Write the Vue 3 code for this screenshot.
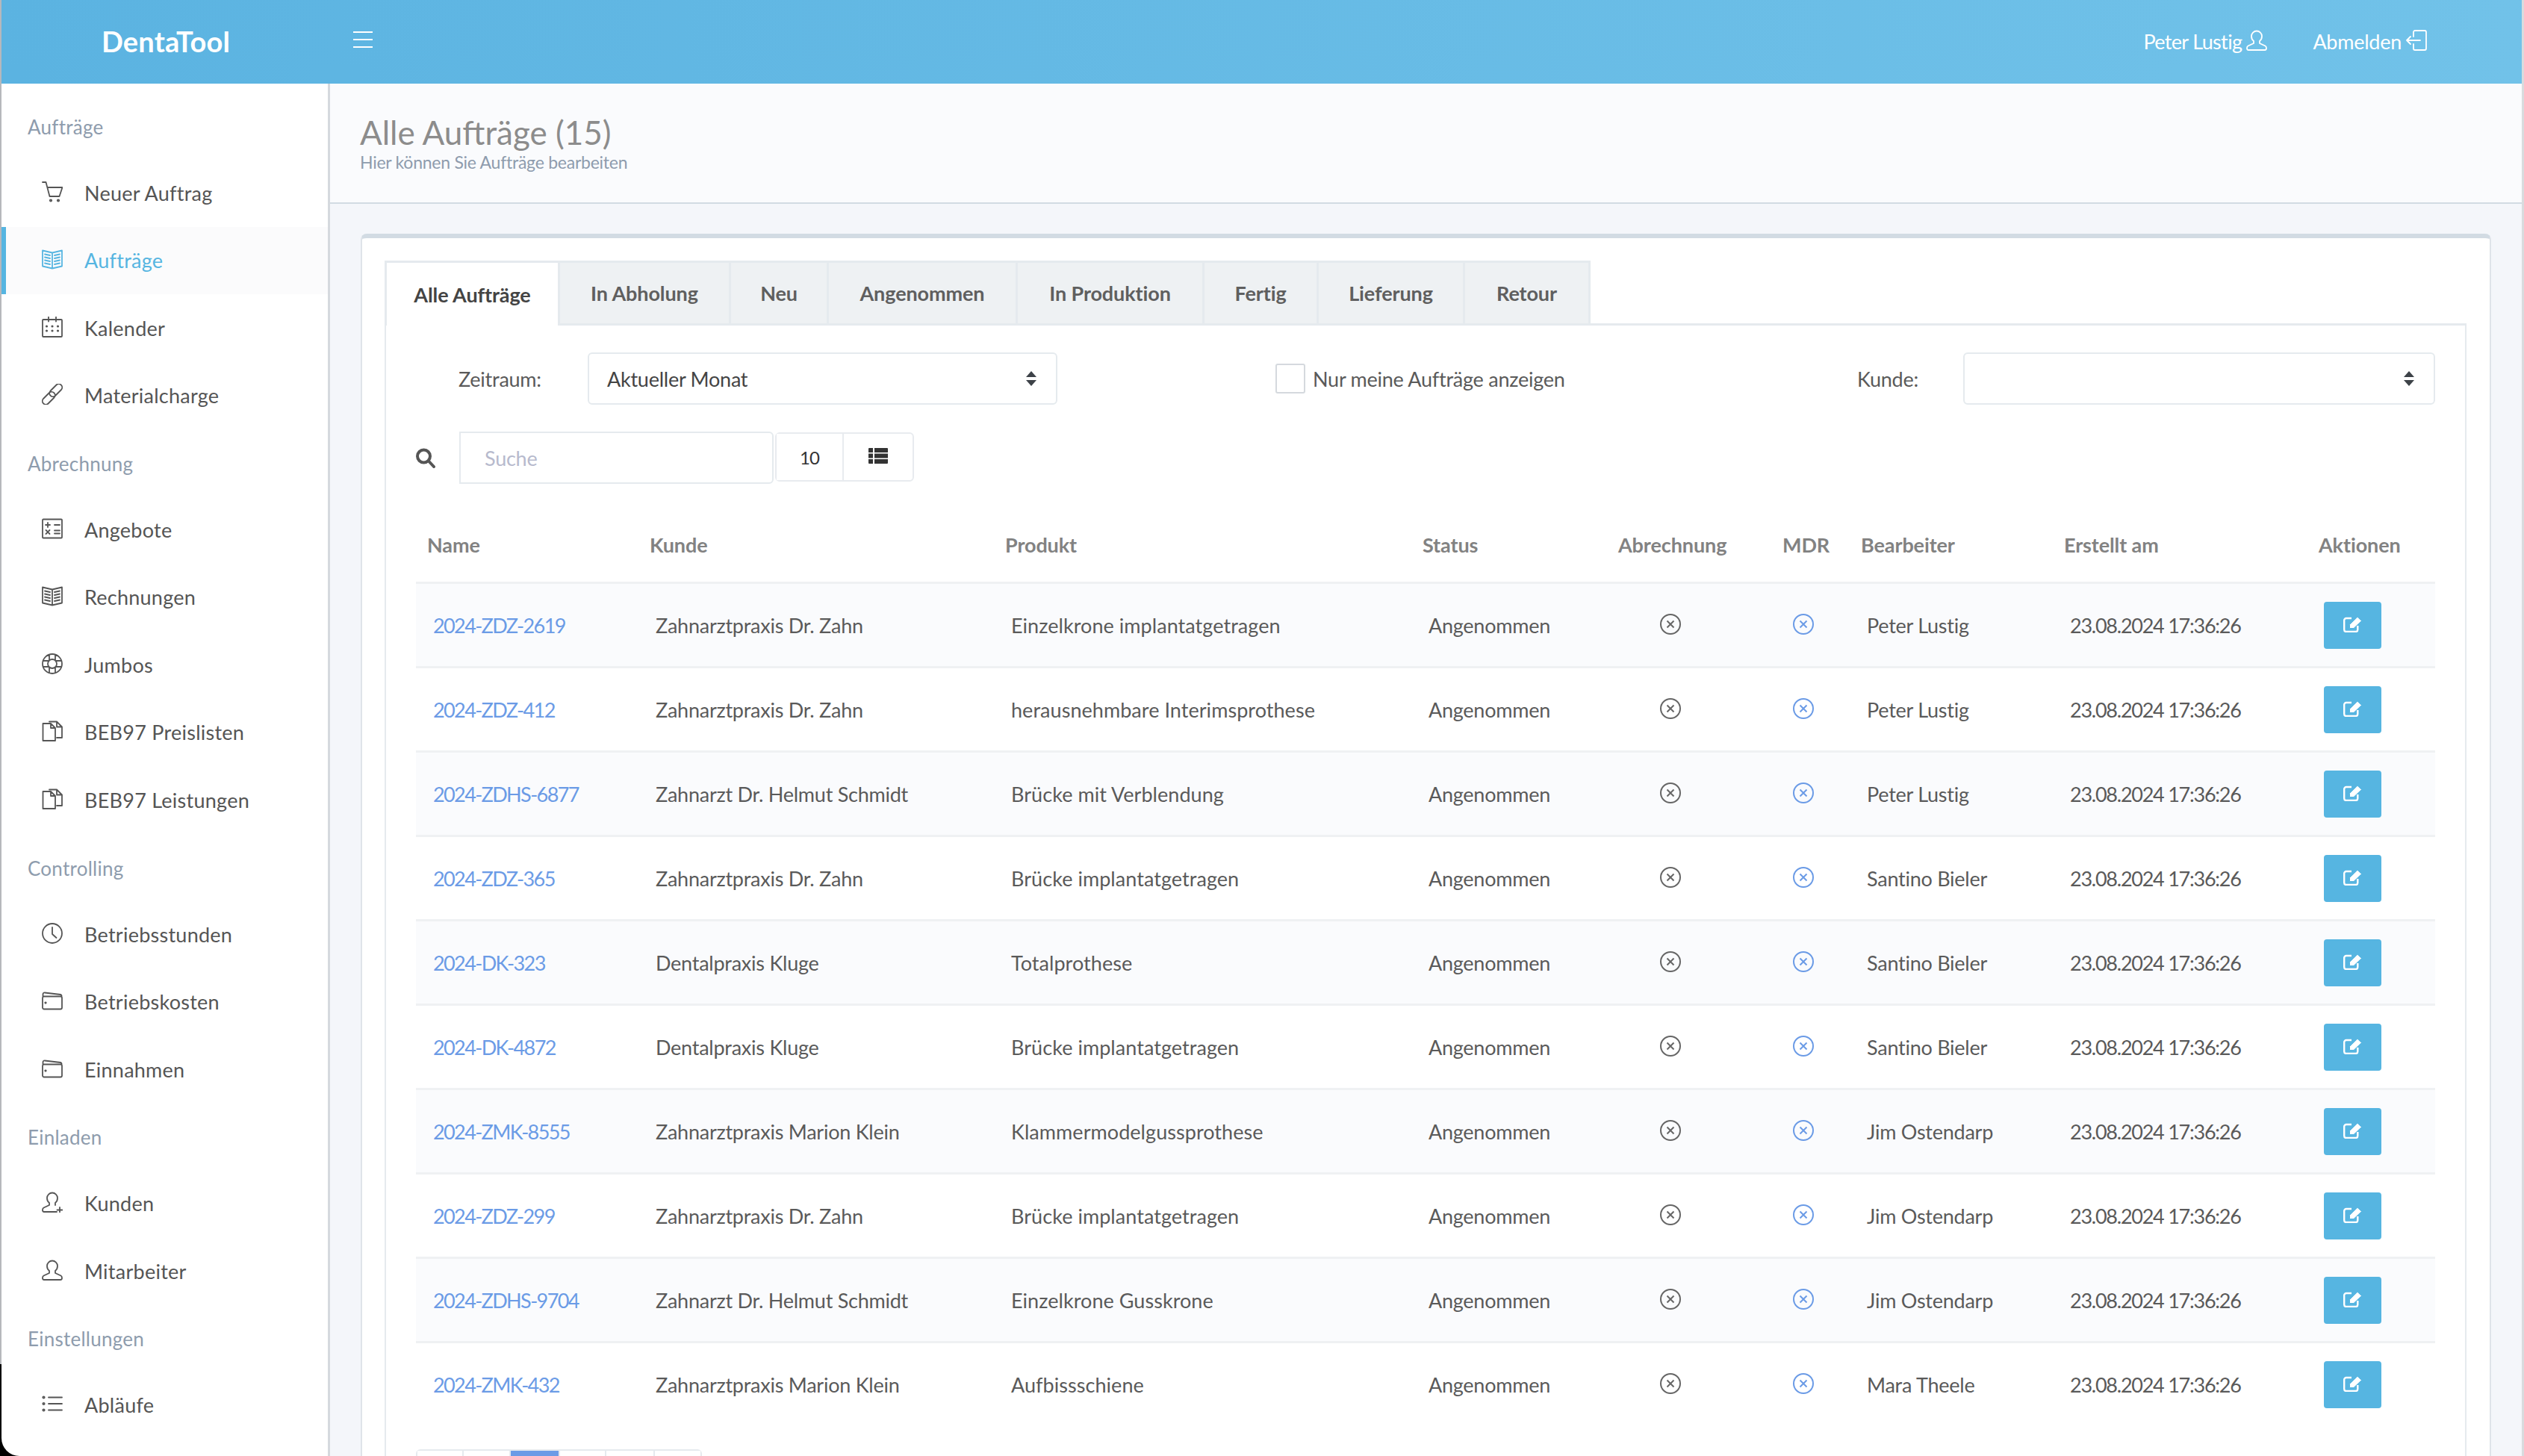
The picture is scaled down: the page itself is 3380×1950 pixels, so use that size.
<template>
  <div class="window">
    <div class="edge edge--left"></div>
    <div class="shell">
      <header class="topbar">
        <div class="brand">DentaTool</div>
        <svg class="burger" width="26" height="22" viewBox="0 0 26 22"><path d="M0 1h26M0 11h26M0 21h26" /></svg>
        <div class="topbar__right">
          <a class="topbar__link topbar__link--user">Peter Lustig
            <svg class="ico ico--top" viewBox="0 0 28 28"><path :d="icons.user" /></svg>
          </a>
          <a class="topbar__link">Abmelden
            <svg class="ico ico--top" viewBox="0 0 28 28"><path :d="icons.logout" /></svg>
          </a>
        </div>
      </header>

      <div class="body">
        <aside class="sidebar">
          <template v-for="group in menu" :key="group.title">
            <div class="sidebar__title">{{ group.title }}</div>
            <a
              v-for="item in group.items"
              :key="item.label"
              :class="['sidebar__item', { active: item.active }]"
            >
              <svg class="ico" viewBox="0 0 28 28"><path :d="icons[item.icon]" /></svg>
              <span>{{ item.label }}</span>
            </a>
          </template>
        </aside>

        <main class="main">
          <div class="page-head">
            <h1>Alle Aufträge (15)</h1>
            <p>Hier können Sie Aufträge bearbeiten</p>
          </div>

          <section class="card">
            <div class="tabs">
              <a
                v-for="(tab, i) in tabs"
                :key="tab.label"
                :class="['tab', { active: i === 0 }]"
                :style="{ width: tab.width + 'px' }"
              >{{ tab.label }}</a>
            </div>

            <div class="panel">
              <div class="filters">
                <label class="filters__label">Zeitraum:</label>
                <div class="select select--period">
                  <span>Aktueller Monat</span>
                  <svg class="sort" width="16" height="20" viewBox="0 0 16 20"><path d="M8 0l7 8H1zM8 20l7-8H1z" /></svg>
                </div>
                <span class="check"></span>
                <span class="check-label">Nur meine Aufträge anzeigen</span>
                <label class="filters__label filters__label--customer">Kunde:</label>
                <div class="select select--customer">
                  <span></span>
                  <svg class="sort" width="16" height="20" viewBox="0 0 16 20"><path d="M8 0l7 8H1zM8 20l7-8H1z" /></svg>
                </div>
              </div>

              <div class="toolbar">
                <svg class="search-ico" width="26" height="27" viewBox="0 0 26 27"><path d="M19 11a8.500 8.500 0 1 1-17 0a8.500 8.500 0 0 1 17 0zM17 17.500l7 7.500" /></svg>
                <input class="search" type="text" placeholder="Suche" />
                <div class="btn-group">
                  <button class="btn-plain btn-plain--size">10</button>
                  <button class="btn-plain btn-plain--view">
                    <svg width="26" height="21" viewBox="0 0 26 21"><path d="M0 1a1 1 0 0 1 1-1h5v6H0zM8 0h17a1 1 0 0 1 1 1v5H8zM0 7.500h6v6H0zM8 7.500h18v6H8zM0 15h6v6H1a1 1 0 0 1-1-1zM8 15h18v5a1 1 0 0 1-1 1H8z" /></svg>
                  </button>
                </div>
              </div>

              <table class="orders">
                <colgroup>
                  <col v-for="col in columns" :key="col.label" :style="{ width: col.width + 'px' }" />
                </colgroup>
                <thead>
                  <tr>
                    <th v-for="col in columns" :key="col.label">{{ col.label }}</th>
                  </tr>
                </thead>
                <tbody>
                  <tr v-for="row in rows" :key="row[0]">
                    <td><a class="order-link">{{ row[0] }}</a></td>
                    <td>{{ row[1] }}</td>
                    <td class="cell-product">{{ row[2] }}</td>
                    <td>Angenommen</td>
                    <td class="cell-bill">
                      <svg class="state" viewBox="0 0 28 28"><path :d="icons.cross" /></svg>
                    </td>
                    <td class="cell-mdr">
                      <svg class="state state--blue" viewBox="0 0 28 28"><path :d="icons.cross" /></svg>
                    </td>
                    <td>{{ row[3] }}</td>
                    <td class="cell-date">23.08.2024 17:36:26</td>
                    <td class="cell-action">
                      <button class="edit">
                        <svg width="25" height="22" viewBox="0 0 25 22">
                          <path class="edit__box" d="M11 3H4A2.800 2.800 0 0 0 1.200 5.800v12.400A2.800 2.800 0 0 0 4 21h12.500a2.800 2.800 0 0 0 2.800-2.800V13" />
                          <path class="edit__pen" d="M8.500 16.500v-5L19 1.200 24.500 6.500 14 16.500z" />
                        </svg>
                      </button>
                    </td>
                  </tr>
                </tbody>
              </table>

              <div class="pager">
                <a v-for="page in pages" :key="page.id" :class="['pager__item', { active: page.active }]" :style="{ width: page.width + 'px' }"></a>
              </div>
            </div>
          </section>
        </main>
      </div>
    </div>
    <div class="edge edge--right"></div>
  </div>
</template>

<script setup>
const dot = (x, y, r = 0.7) => `M${x - r} ${y}a${r} ${r} 0 1 0 ${2 * r} 0a${r} ${r} 0 1 0-${2 * r} 0`

const userShape = 'M14 1.500a7 7 0 0 0-7 7c0 2.800 1 5 3 6.500v3L2.500 21.500C1.300 22.200 1 23.200 1 24.500S2 27 3 27h22c1 0 2-1.200 2-2.500s-.3-2.300-1.500-3L18 18v-3c2-1.500 3-3.700 3-6.500a7 7 0 0 0-7-7z'

const icons = {
  cart: 'M1 1h4.500L10.500 20h13l4-12H7.500' + dot(12, 25.500, 1.200) + dot(22, 25.500, 1.200),
  book: 'M1 2.500l13 3 13-3v21l-13 3-13-3zM14 5.500v21M4 7.500l7 1.500M4 11.500l7 1.500M4 15.500l7 1.500M4 19.500l7 1.500M17 9l7-1.500M17 13l7-1.500M17 17l7-1.500M17 21l7-1.500',
  calendar: 'M2 4h24a1 1 0 0 1 1 1v21a1 1 0 0 1-1 1H2a1 1 0 0 1-1-1V5a1 1 0 0 1 1-1zM9 .5v6M19 .5v6' + dot(6.500, 13) + dot(14, 13) + dot(21.500, 13) + dot(6.500, 19) + dot(14, 19) + dot(21.500, 19),
  link: 'M2 20L10 12a4.600 4.600 0 0 1 6.500 6.500L8.500 26.500A4.600 4.600 0 0 1 2 20zM11.500 9.500L19.500 1.500A4.600 4.600 0 0 1 26 8L18 16A4.600 4.600 0 0 1 11.500 9.500z',
  calculator: 'M2 1.500h24a1 1 0 0 1 1 1v23a1 1 0 0 1-1 1H2a1 1 0 0 1-1-1v-23a1 1 0 0 1 1-1zM5 9h6M8 6v6M17 9h7M5.500 16l5 5M10.500 16l-5 5M17 16.500h7M17 20.500h7',
  buoy: 'M27 14a13 13 0 1 1-26 0a13 13 0 0 1 26 0zM20 14a6 6 0 1 1-12 0a6 6 0 0 1 12 0zM10 2v7.500M18 2v7.500M10 18.500V26M18 18.500V26M2 10h7.500M2 18h7.500M18.500 10H26M18.500 18H26',
  docs: 'M1.500 4H12l6 6v17H1.500zM12 4v6h6M10 1.500h10l7 7V23h-7M20 1.500v7h7',
  clock: 'M27 14a13 13 0 1 1-26 0a13 13 0 0 1 26 0zM14 6v9l5.500 5',
  wallet: 'M3 8.500h22a2 2 0 0 1 2 2v13a2 2 0 0 1-2 2H3a2 2 0 0 1-2-2v-13a2 2 0 0 1 2-2zM1.500 9V5.500A2 2 0 0 1 4 3.500L25 6a2 2 0 0 1 1.500 2.500' + dot(5, 17),
  user: userShape,
  userPlus: 'M14 1.500a7 7 0 0 0-7 7c0 2.800 1 5 3 6.500v3L2.500 21.500C1.300 22.200 1 23.200 1 24.500S2 27 3 27h17M18 18v-3c2-1.500 3-3.700 3-6.500a7 7 0 0 0-7-7M24 21v7M20.500 24.500h7',
  list: 'M9 5.500h18M9 14h18M9 22.500h18' + dot(2.500, 5.500, 1.200) + dot(2.500, 14, 1.200) + dot(2.500, 22.500, 1.200),
  logout: 'M10 9V3a2 2 0 0 1 2-2h13a2 2 0 0 1 2 2v22a2 2 0 0 1-2 2H12a2 2 0 0 1-2-2v-6M19 14H1M6 9l-5 5 5 5',
  cross: 'M27 14a13 13 0 1 1-26 0a13 13 0 0 1 26 0zM9.500 9.500l9 9M18.500 9.500l-9 9'
}

const menu = [
  { title: 'Aufträge', items: [
    { label: 'Neuer Auftrag', icon: 'cart' },
    { label: 'Aufträge', icon: 'book', active: true },
    { label: 'Kalender', icon: 'calendar' },
    { label: 'Materialcharge', icon: 'link' }
  ] },
  { title: 'Abrechnung', items: [
    { label: 'Angebote', icon: 'calculator' },
    { label: 'Rechnungen', icon: 'book' },
    { label: 'Jumbos', icon: 'buoy' },
    { label: 'BEB97 Preislisten', icon: 'docs' },
    { label: 'BEB97 Leistungen', icon: 'docs' }
  ] },
  { title: 'Controlling', items: [
    { label: 'Betriebsstunden', icon: 'clock' },
    { label: 'Betriebskosten', icon: 'wallet' },
    { label: 'Einnahmen', icon: 'wallet' }
  ] },
  { title: 'Einladen', items: [
    { label: 'Kunden', icon: 'userPlus' },
    { label: 'Mitarbeiter', icon: 'user' }
  ] },
  { title: 'Einstellungen', items: [
    { label: 'Abläufe', icon: 'list' }
  ] }
]

const tabs = [
  { label: 'Alle Aufträge', width: 235 },
  { label: 'In Abholung', width: 229 },
  { label: 'Neu', width: 131 },
  { label: 'Angenommen', width: 253 },
  { label: 'In Produktion', width: 250 },
  { label: 'Fertig', width: 153 },
  { label: 'Lieferung', width: 196 },
  { label: 'Retour', width: 168 }
]

const columns = [
  { label: 'Name', width: 298 },
  { label: 'Kunde', width: 476 },
  { label: 'Produkt', width: 559 },
  { label: 'Status', width: 262 },
  { label: 'Abrechnung', width: 220 },
  { label: 'MDR', width: 105 },
  { label: 'Bearbeiter', width: 272 },
  { label: 'Erstellt am', width: 341 },
  { label: 'Aktionen', width: 171 }
]

const rows = [
  ['2024-ZDZ-2619', 'Zahnarztpraxis Dr. Zahn', 'Einzelkrone implantatgetragen', 'Peter Lustig'],
  ['2024-ZDZ-412', 'Zahnarztpraxis Dr. Zahn', 'herausnehmbare Interimsprothese', 'Peter Lustig'],
  ['2024-ZDHS-6877', 'Zahnarzt Dr. Helmut Schmidt', 'Brücke mit Verblendung', 'Peter Lustig'],
  ['2024-ZDZ-365', 'Zahnarztpraxis Dr. Zahn', 'Brücke implantatgetragen', 'Santino Bieler'],
  ['2024-DK-323', 'Dentalpraxis Kluge', 'Totalprothese', 'Santino Bieler'],
  ['2024-DK-4872', 'Dentalpraxis Kluge', 'Brücke implantatgetragen', 'Santino Bieler'],
  ['2024-ZMK-8555', 'Zahnarztpraxis Marion Klein', 'Klammermodelgussprothese', 'Jim Ostendarp'],
  ['2024-ZDZ-299', 'Zahnarztpraxis Dr. Zahn', 'Brücke implantatgetragen', 'Jim Ostendarp'],
  ['2024-ZDHS-9704', 'Zahnarzt Dr. Helmut Schmidt', 'Einzelkrone Gusskrone', 'Jim Ostendarp'],
  ['2024-ZMK-432', 'Zahnarztpraxis Marion Klein', 'Aufbissschiene', 'Mara Theele']
]

const pages = [
  { id: 'prev', width: 62 },
  { id: 1, width: 63 },
  { id: 2, width: 66, active: true },
  { id: 3, width: 62 },
  { id: 4, width: 65 },
  { id: 'next', width: 61 }
]
</script>

<style>
html,
body {
  margin: 0;
  background: #000;
}
</style>

<style scoped>
.window {
  display: flex;
  width: 3380px;
  height: 1950px;
  overflow: hidden;
  background: #000;
  color: #5a5a5a;
  font-family: Lato, "Noto Sans", sans-serif;
  font-size: 27px;
  letter-spacing: -0.25px;
}

.edge {
  flex: none;
}

.edge--left {
  width: 2px;
  background: linear-gradient(#b6b8bc 0, #b6b8bc 1827px, #000 1827px);
}

.edge--right {
  width: 3px;
  background: #d9dbde;
}

.shell {
  flex: 1;
  min-width: 0;
  display: flex;
  flex-direction: column;
}

.topbar {
  flex: none;
  height: 112px;
  display: flex;
  align-items: center;
  background: linear-gradient(90deg, #5bb3e1, #71c2e9);
  color: #fff;
}

.brand {
  width: 471px;
  padding: 0 0 2px 134px;
  box-sizing: border-box;
  font-size: 38px;
  font-weight: 700;
  letter-spacing: 0.2px;
}

.burger {
  margin-bottom: 6px;
}

.burger path {
  fill: none;
  stroke: #fff;
  stroke-width: 2;
}

.topbar__right {
  margin-left: auto;
  margin-right: 127px;
  display: flex;
  align-items: center;
  gap: 61px;
}

.topbar__link {
  display: flex;
  align-items: center;
  gap: 6px;
  padding-bottom: 1px;
}

.topbar__link--user {
  letter-spacing: -0.65px;
}

.ico {
  flex: none;
  width: 28px;
  height: 28px;
  fill: none;
  stroke: #555;
  stroke-width: 1.800;
  stroke-linecap: round;
  stroke-linejoin: round;
}

.ico--top {
  stroke: #fff;
  margin-top: -4px;
}

.body {
  flex: 1;
  min-height: 0;
  display: flex;
}

.sidebar {
  flex: none;
  width: 440px;
  box-sizing: border-box;
  padding-top: 12px;
  background: #fff;
  border-right: 3px solid #d5d9de;
  border-bottom-left-radius: 24px;
  letter-spacing: 0.25px;
}

.sidebar__title {
  height: 89.100px;
  line-height: 92px;
  padding-left: 35px;
  color: #8e9cad;
  font-size: 26px;
}

.sidebar__item {
  height: 90.500px;
  display: flex;
  align-items: center;
  gap: 29px;
  padding-left: 54px;
  color: #555;
}

.sidebar__item .ico {
  margin-top: -3px;
}

.sidebar__item.active {
  background: #fbfbfc;
  box-shadow: inset 6px 0 0 #56b5e1;
  color: #56b5e1;
}

.sidebar__item.active .ico {
  stroke: #56b5e1;
}

.main {
  flex: 1;
  min-width: 0;
  background: #f4f6fa;
}

.page-head {
  height: 161px;
  box-sizing: border-box;
  padding: 38px 0 0 40px;
  background: #fafbfd;
  border-bottom: 2px solid #d2dbe3;
}

.page-head h1 {
  margin: 0;
  color: #8c8c8c;
  font-size: 44px;
  font-weight: 400;
  line-height: 54px;
  letter-spacing: 0;
}

.page-head p {
  margin: 0;
  color: #8e9cad;
  font-size: 23px;
  line-height: 26px;
}

.card {
  margin: 40px 41px 0 41px;
  padding: 30px 31px 0 30px;
  background: #fff;
  border: 2px solid #dfe4e9;
  border-top: 6px solid #d2dbe3;
  border-bottom: 0;
  border-radius: 8px 8px 0 0;
}

.tabs {
  display: flex;
  height: 87px;
  box-sizing: border-box;
  border-bottom: 3px solid #e5eaee;
}

.tab {
  box-sizing: border-box;
  height: 87px;
  display: flex;
  align-items: center;
  justify-content: center;
  background: #eef1f3;
  border: solid #e5eaee;
  border-width: 3px 3px 3px 0;
  color: #5f5f5f;
  font-weight: 700;
  letter-spacing: -0.1px;
}

.tab.active {
  background: #fff;
  border-width: 3px 0 0 3px;
  border-right: 3px solid #e5eaee;
  color: #444;
}

.panel {
  padding: 36px 40px 0;
  border: solid #e5eaee;
  border-width: 0 2px;
}

.filters {
  height: 70px;
  display: flex;
  align-items: center;
  padding-left: 57px;
}

.filters__label {
  width: 173px;
  flex: none;
}

.filters__label--customer {
  width: 142px;
  margin-left: auto;
}

.select {
  box-sizing: border-box;
  height: 70px;
  display: flex;
  align-items: center;
  justify-content: space-between;
  padding: 0 25px 0 24px;
  border: 2px solid #e5eaee;
  border-radius: 6px;
  color: #444;
}

.select--period {
  width: 629px;
}

.select--customer {
  width: 632px;
}

.sort path {
  fill: #3d4248;
}

.check {
  flex: none;
  width: 40px;
  height: 40px;
  box-sizing: border-box;
  margin-left: 292px;
  margin-right: 10px;
  background: #fff;
  border: 2px solid #d5d9de;
  border-radius: 3px;
}

.toolbar {
  display: flex;
  align-items: flex-start;
  margin-top: 36px;
  margin-bottom: 31px;
}

.search-ico {
  margin: 22px 32px 0 0;
}

.search-ico path {
  fill: none;
  stroke: #555;
  stroke-width: 4;
  stroke-linecap: round;
}

.search {
  width: 421px;
  height: 70px;
  box-sizing: border-box;
  padding: 0 32px;
  border: 2px solid #e5eaee;
  border-radius: 0 6px 6px 0;
  outline: none;
  color: #555;
  font: inherit;
  letter-spacing: inherit;
}

.search::placeholder {
  color: #b7bacd;
}

.btn-group {
  display: flex;
  margin: 1px 0 0 2px;
  height: 66px;
  box-sizing: border-box;
  border: 2px solid #e8ebef;
  border-radius: 6px;
}

.btn-plain {
  height: 100%;
  padding: 0;
  border: 0;
  background: #fff;
  color: #333;
  font-family: inherit;
  font-size: 24px;
  letter-spacing: -1px;
}

.btn-plain--size {
  width: 90px;
  border-right: 2px solid #e8ebef;
}

.btn-plain--view {
  width: 92px;
  display: flex;
  align-items: center;
  justify-content: center;
  border-radius: 0 6px 6px 0;
}

.btn-plain--view svg {
  margin-bottom: 4px;
  fill: #333;
}

.orders {
  width: 2704px;
  table-layout: fixed;
  border-collapse: separate;
  border-spacing: 0;
}

.orders th {
  height: 100px;
  padding: 0 0 0 15px;
  text-align: left;
  color: #828282;
  font-weight: 700;
  letter-spacing: -0.1px;
  box-sizing: border-box;
}

.orders td {
  height: 113px;
  padding: 0 0 0 23px;
  box-sizing: border-box;
  border-top: 3px solid #eff1f3;
  white-space: nowrap;
}

.orders tbody tr:nth-child(odd) td {
  background: #fafbfd;
}

.orders td.cell-product {
  letter-spacing: 0.05px;
}

.orders td.cell-bill {
  padding-left: 71px;
}

.orders td.cell-mdr {
  padding-left: 29px;
}

.orders td.cell-date {
  letter-spacing: -1.250px;
}

.orders td.cell-action {
  padding-left: 22px;
}

.order-link {
  color: #6b9be6;
  letter-spacing: -1.600px;
}

.state {
  display: block;
  width: 28px;
  height: 28px;
  margin-top: -3px;
  fill: none;
  stroke: #666;
  stroke-width: 2;
}

.state--blue {
  stroke: #6b9be6;
}

.edit {
  display: flex;
  align-items: center;
  justify-content: center;
  width: 77px;
  height: 63px;
  padding: 0 0 2px;
  border: 0;
  border-radius: 4px;
  background: #56b5e1;
}

.edit__box {
  fill: none;
  stroke: #fff;
  stroke-width: 2.400;
}

.edit__pen {
  fill: #fff;
  stroke: #56b5e1;
  stroke-width: 1;
}

.pager {
  display: inline-flex;
  margin-top: 32px;
  border: 2px solid #e5eaee;
  border-radius: 6px;
}

.pager__item {
  height: 68px;
  box-sizing: border-box;
  border-right: 2px solid #e5eaee;
  background: #fff;
}

.pager__item:last-child {
  border-right: 0;
}

.pager__item.active {
  background: #6b9be6;
}
</style>
